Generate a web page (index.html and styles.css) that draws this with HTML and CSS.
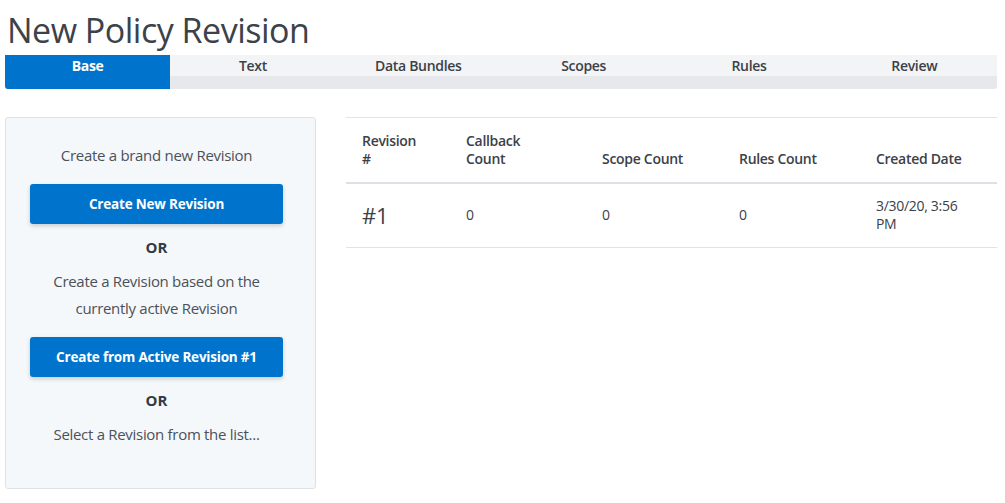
FILE: index.html
```html
<!DOCTYPE html>
<html>
<head>
<meta charset="utf-8">
<link rel="stylesheet" href="styles.css">
</head>
<body>
<div class="page">
  <h1 class="title">New Policy Revision</h1>
  <nav class="tabs">
    <div class="tab active"><span class="tab-label">Base</span></div>
    <div class="tab"><span class="tab-label">Text</span></div>
    <div class="tab"><span class="tab-label">Data Bundles</span></div>
    <div class="tab"><span class="tab-label">Scopes</span></div>
    <div class="tab"><span class="tab-label">Rules</span></div>
    <div class="tab"><span class="tab-label">Review</span></div>
  </nav>
  <div class="content">
    <aside class="panel">
      <p class="hint">Create a brand new Revision</p>
      <button class="btn">Create New Revision</button>
      <p class="or">OR</p>
      <p class="hint two">Create a Revision based on the currently active Revision</p>
      <button class="btn">Create from Active Revision #1</button>
      <p class="or">OR</p>
      <p class="hint last">Select a Revision from the list...</p>
    </aside>
    <table class="revs">
      <thead>
        <tr>
          <th class="c1">Revision<br>#</th>
          <th class="c2">Callback<br>Count</th>
          <th class="c3">Scope Count</th>
          <th class="c4">Rules Count</th>
          <th class="c5">Created Date</th>
        </tr>
      </thead>
      <tbody>
        <tr>
          <td class="num">#1</td>
          <td>0</td>
          <td>0</td>
          <td>0</td>
          <td>3/30/20, 3:56<br>PM</td>
        </tr>
      </tbody>
    </table>
  </div>
</div>
</body>
</html>
```

FILE: styles.css
```css
* { box-sizing: border-box; }
body {
  margin: 0;
  font-family: "Open Sans", "Noto Sans", Arial, sans-serif;
  color: #3a4048;
  background: #fff;
}
.page {
  padding: 0 8px 0 5px;
}
.title {
  margin: 0;
  padding: 8px 0 0 2px;
  height: 55px;
  font-size: 34px;
  font-weight: 400;
  line-height: 44px;
  color: #3b424a;
  letter-spacing: -0.5px;
}
.tabs {
  display: flex;
  height: 34px;
  background: #e6e8eb;
  border-radius: 0 0 3px 3px;
}
.tab {
  flex: 1;
  display: flex;
  flex-direction: column;
}
.tab-label {
  display: block;
  height: 21px;
  line-height: 22px;
  background: #f3f4f6;
  text-align: center;
  font-size: 14px;
  font-weight: 600;
  color: #3b4148;
  letter-spacing: -0.3px;
}
.tab.active {
  background: #0074cc;
  border-radius: 0 0 0 3px;
}
.tab.active .tab-label {
  background: transparent;
  color: #fff;
  font-weight: 700;
}
.content {
  display: flex;
  gap: 30px;
  margin-top: 28px;
}
.panel {
  width: 311px;
  height: 372px;
  flex: none;
  background: #f5f8fb;
  border: 1px solid #dde2e7;
  border-radius: 3px;
  padding: 24px 32px 0 24px;
  display: flex;
  flex-direction: column;
  align-items: center;
  text-align: center;
}
.hint {
  margin: 0;
  font-size: 15px;
  line-height: 27px;
  color: #4b5159;
  font-weight: 400;
  letter-spacing: -0.3px;
}
.hint.two {
  padding: 0 8px;
}
.btn {
  width: 253px;
  height: 40px;
  margin: 15px 0 10px;
  border: 0;
  border-radius: 3px;
  background: #0074cc;
  color: #fff;
  font-family: inherit;
  font-size: 13.5px;
  font-weight: 700;
  letter-spacing: -0.2px;
  box-shadow: 0 2px 4px rgba(0, 0, 0, 0.18);
}
.or {
  margin: 0 0 8px;
  font-size: 15px;
  font-weight: 700;
  line-height: 26px;
  color: #333a42;
}
.revs {
  flex: 1;
  border-collapse: collapse;
  border-top: 1px solid #e0e3e7;
  font-size: 14px;
  color: #3a4048;
  align-self: flex-start;
}
.revs th {
  text-align: left;
  vertical-align: bottom;
  font-weight: 600;
  line-height: 18px;
  padding: 14px 16px 14px;
  height: 65px;
  border-bottom: 2px solid #dde1e6;
  color: #3b4148;
  letter-spacing: -0.3px;
}
.revs td {
  height: 64px;
  padding: 0 16px;
  line-height: 18px;
  vertical-align: middle;
  border-bottom: 1px solid #e0e3e7;
  letter-spacing: -0.3px;
}
.revs td.num {
  font-size: 22px;
  color: #3b424a;
}
.c1 { width: 104px; }
.c2 { width: 136px; }
.c3 { width: 137px; }
.c4 { width: 137px; }
```
